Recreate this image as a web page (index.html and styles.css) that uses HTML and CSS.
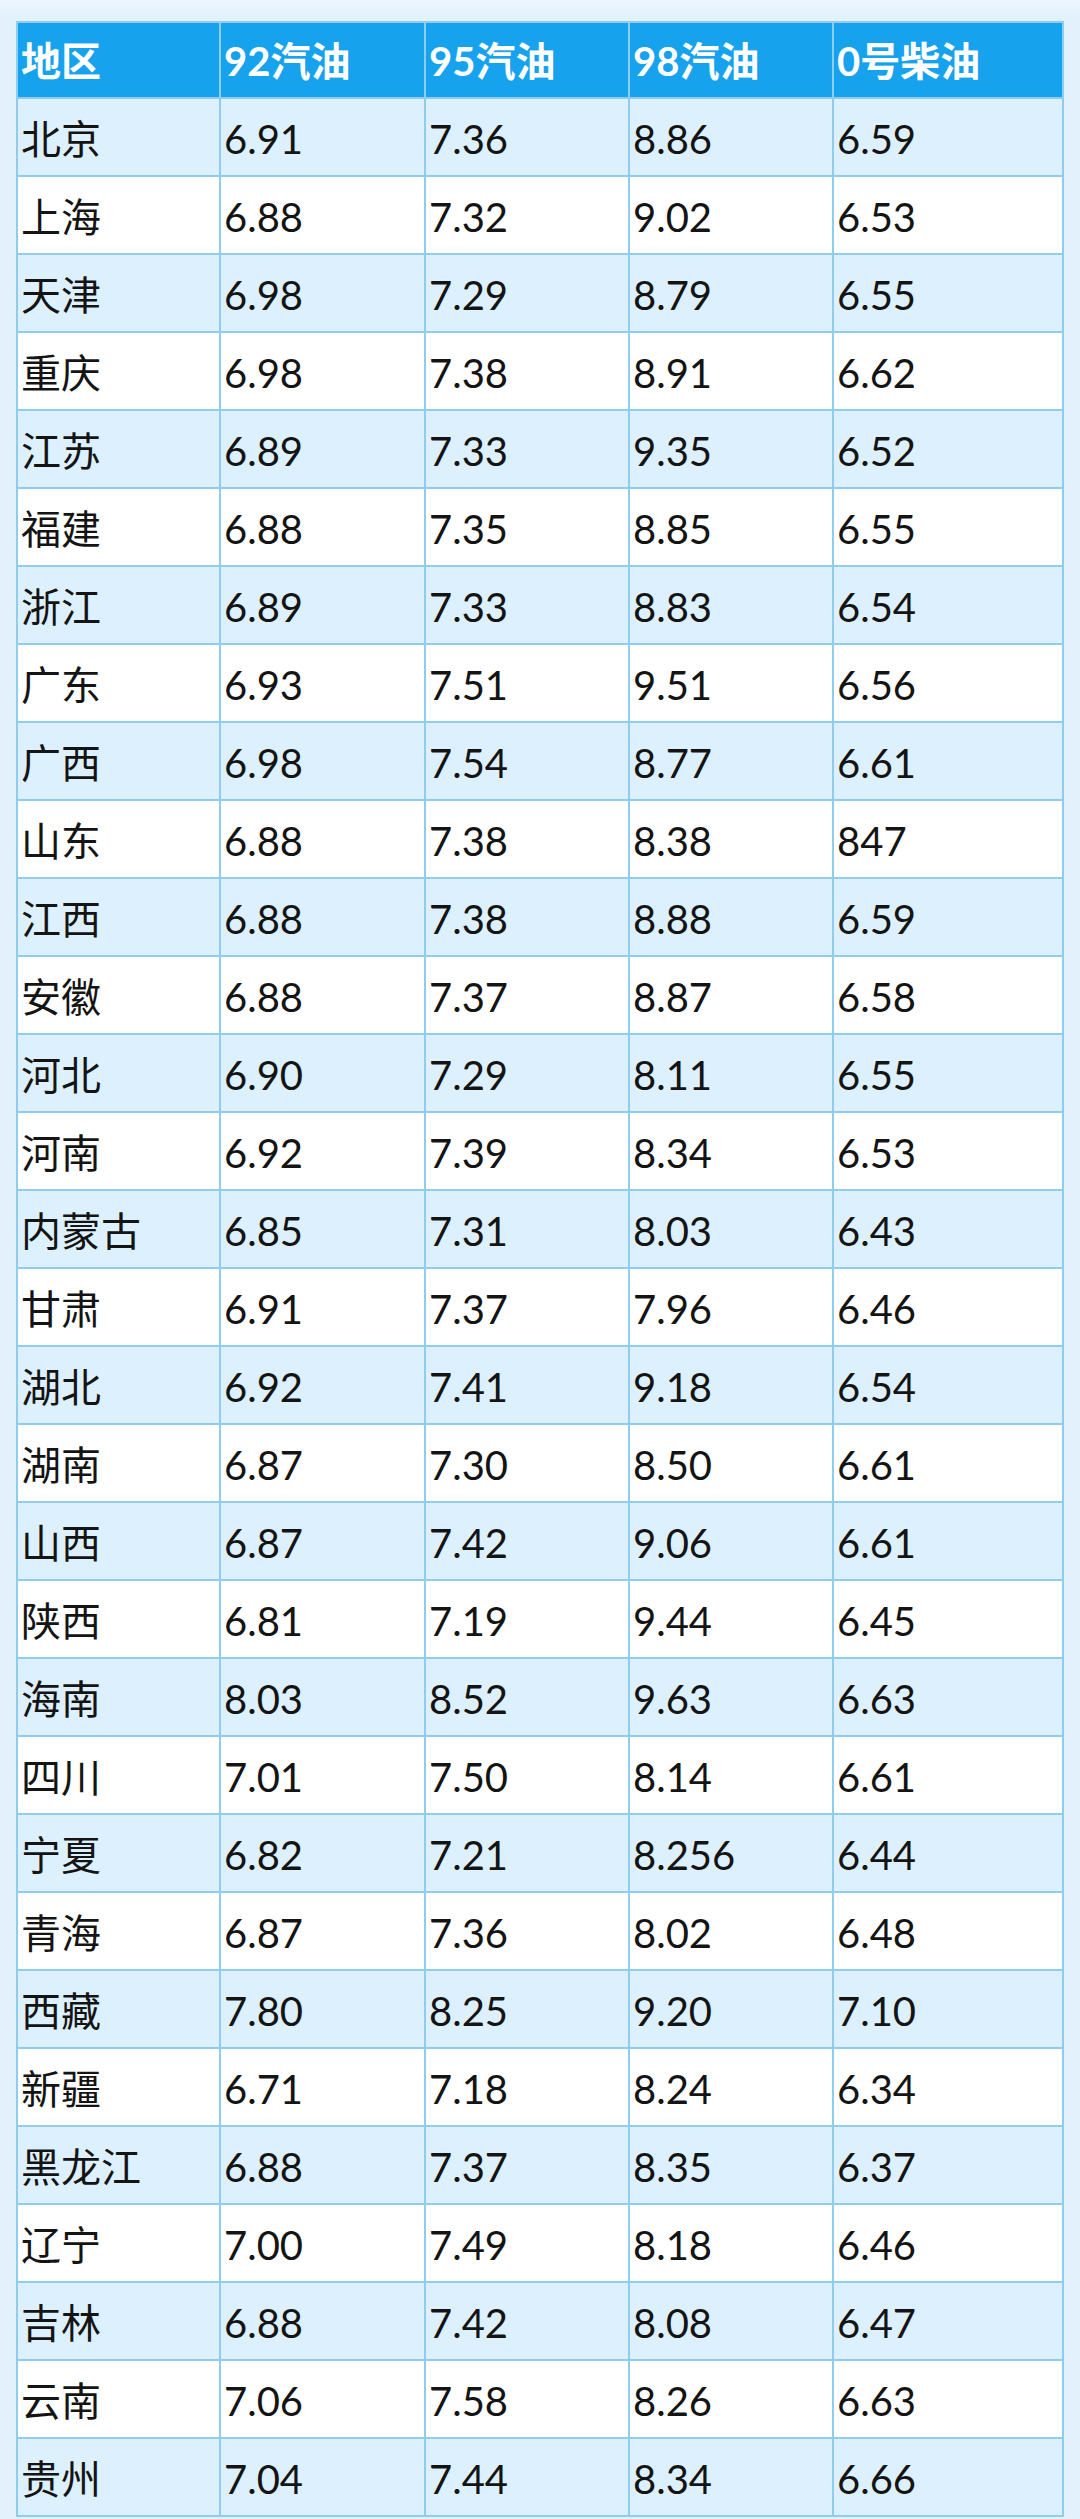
FILE: index.html
```html
<!DOCTYPE html>
<html lang="zh-CN">
<head>
<meta charset="utf-8">
<title>油价表</title>
<link rel="stylesheet" href="styles.css">
</head>
<body>
<div class="page">
  <div class="table">
    <div class="row head"><div class="cell">地区</div><div class="cell">92汽油</div><div class="cell">95汽油</div><div class="cell">98汽油</div><div class="cell">0号柴油</div></div>
    <div class="row odd"><div class="cell">北京</div><div class="cell">6.91</div><div class="cell">7.36</div><div class="cell">8.86</div><div class="cell">6.59</div></div>
    <div class="row"><div class="cell">上海</div><div class="cell">6.88</div><div class="cell">7.32</div><div class="cell">9.02</div><div class="cell">6.53</div></div>
    <div class="row odd"><div class="cell">天津</div><div class="cell">6.98</div><div class="cell">7.29</div><div class="cell">8.79</div><div class="cell">6.55</div></div>
    <div class="row"><div class="cell">重庆</div><div class="cell">6.98</div><div class="cell">7.38</div><div class="cell">8.91</div><div class="cell">6.62</div></div>
    <div class="row odd"><div class="cell">江苏</div><div class="cell">6.89</div><div class="cell">7.33</div><div class="cell">9.35</div><div class="cell">6.52</div></div>
    <div class="row"><div class="cell">福建</div><div class="cell">6.88</div><div class="cell">7.35</div><div class="cell">8.85</div><div class="cell">6.55</div></div>
    <div class="row odd"><div class="cell">浙江</div><div class="cell">6.89</div><div class="cell">7.33</div><div class="cell">8.83</div><div class="cell">6.54</div></div>
    <div class="row"><div class="cell">广东</div><div class="cell">6.93</div><div class="cell">7.51</div><div class="cell">9.51</div><div class="cell">6.56</div></div>
    <div class="row odd"><div class="cell">广西</div><div class="cell">6.98</div><div class="cell">7.54</div><div class="cell">8.77</div><div class="cell">6.61</div></div>
    <div class="row"><div class="cell">山东</div><div class="cell">6.88</div><div class="cell">7.38</div><div class="cell">8.38</div><div class="cell">847</div></div>
    <div class="row odd"><div class="cell">江西</div><div class="cell">6.88</div><div class="cell">7.38</div><div class="cell">8.88</div><div class="cell">6.59</div></div>
    <div class="row"><div class="cell">安徽</div><div class="cell">6.88</div><div class="cell">7.37</div><div class="cell">8.87</div><div class="cell">6.58</div></div>
    <div class="row odd"><div class="cell">河北</div><div class="cell">6.90</div><div class="cell">7.29</div><div class="cell">8.11</div><div class="cell">6.55</div></div>
    <div class="row"><div class="cell">河南</div><div class="cell">6.92</div><div class="cell">7.39</div><div class="cell">8.34</div><div class="cell">6.53</div></div>
    <div class="row odd"><div class="cell">内蒙古</div><div class="cell">6.85</div><div class="cell">7.31</div><div class="cell">8.03</div><div class="cell">6.43</div></div>
    <div class="row"><div class="cell">甘肃</div><div class="cell">6.91</div><div class="cell">7.37</div><div class="cell">7.96</div><div class="cell">6.46</div></div>
    <div class="row odd"><div class="cell">湖北</div><div class="cell">6.92</div><div class="cell">7.41</div><div class="cell">9.18</div><div class="cell">6.54</div></div>
    <div class="row"><div class="cell">湖南</div><div class="cell">6.87</div><div class="cell">7.30</div><div class="cell">8.50</div><div class="cell">6.61</div></div>
    <div class="row odd"><div class="cell">山西</div><div class="cell">6.87</div><div class="cell">7.42</div><div class="cell">9.06</div><div class="cell">6.61</div></div>
    <div class="row"><div class="cell">陕西</div><div class="cell">6.81</div><div class="cell">7.19</div><div class="cell">9.44</div><div class="cell">6.45</div></div>
    <div class="row odd"><div class="cell">海南</div><div class="cell">8.03</div><div class="cell">8.52</div><div class="cell">9.63</div><div class="cell">6.63</div></div>
    <div class="row"><div class="cell">四川</div><div class="cell">7.01</div><div class="cell">7.50</div><div class="cell">8.14</div><div class="cell">6.61</div></div>
    <div class="row odd"><div class="cell">宁夏</div><div class="cell">6.82</div><div class="cell">7.21</div><div class="cell">8.256</div><div class="cell">6.44</div></div>
    <div class="row"><div class="cell">青海</div><div class="cell">6.87</div><div class="cell">7.36</div><div class="cell">8.02</div><div class="cell">6.48</div></div>
    <div class="row odd"><div class="cell">西藏</div><div class="cell">7.80</div><div class="cell">8.25</div><div class="cell">9.20</div><div class="cell">7.10</div></div>
    <div class="row"><div class="cell">新疆</div><div class="cell">6.71</div><div class="cell">7.18</div><div class="cell">8.24</div><div class="cell">6.34</div></div>
    <div class="row odd"><div class="cell">黑龙江</div><div class="cell">6.88</div><div class="cell">7.37</div><div class="cell">8.35</div><div class="cell">6.37</div></div>
    <div class="row"><div class="cell">辽宁</div><div class="cell">7.00</div><div class="cell">7.49</div><div class="cell">8.18</div><div class="cell">6.46</div></div>
    <div class="row odd"><div class="cell">吉林</div><div class="cell">6.88</div><div class="cell">7.42</div><div class="cell">8.08</div><div class="cell">6.47</div></div>
    <div class="row"><div class="cell">云南</div><div class="cell">7.06</div><div class="cell">7.58</div><div class="cell">8.26</div><div class="cell">6.63</div></div>
    <div class="row odd"><div class="cell">贵州</div><div class="cell">7.04</div><div class="cell">7.44</div><div class="cell">8.34</div><div class="cell">6.66</div></div>
  </div>
</div>
</body>
</html>
```
FILE: styles.css
```css
html, body {
  margin: 0;
  padding: 0;
  background: #e2f1fc;
}

.page {
  padding: 21px 0 0 16px;
  height: 2519px;
  box-sizing: border-box;
  background: linear-gradient(#ecf6fd 0, #e2f1fc 20px);
}

.table {
  width: 1048px;
  border-left: 2px solid #8fcdef;
  border-top: 2px solid #8fcdef;
  box-sizing: border-box;
  font-family: Lato, "Noto Sans CJK SC", sans-serif;
  color: #141414;
}

.row {
  display: grid;
  grid-template-columns: 203px 205px 204px 204px 230px;
  height: 78px;
  background: #ffffff;
}

.row.odd {
  background: #ddf0fd;
}

.row.head {
  height: 76px;
  background: #17a2ee;
  color: #ffffff;
  font-weight: 700;
}

.cell {
  box-sizing: border-box;
  border-right: 2px solid #8fcdef;
  border-bottom: 2px solid #8fcdef;
  display: flex;
  align-items: center;
  padding: 4px 0 0 3px;
  font-size: 40px;
  line-height: 1;
  white-space: nowrap;
}

.row.head .cell {
  font-size: 40px;
  padding-top: 2px;
}
```
